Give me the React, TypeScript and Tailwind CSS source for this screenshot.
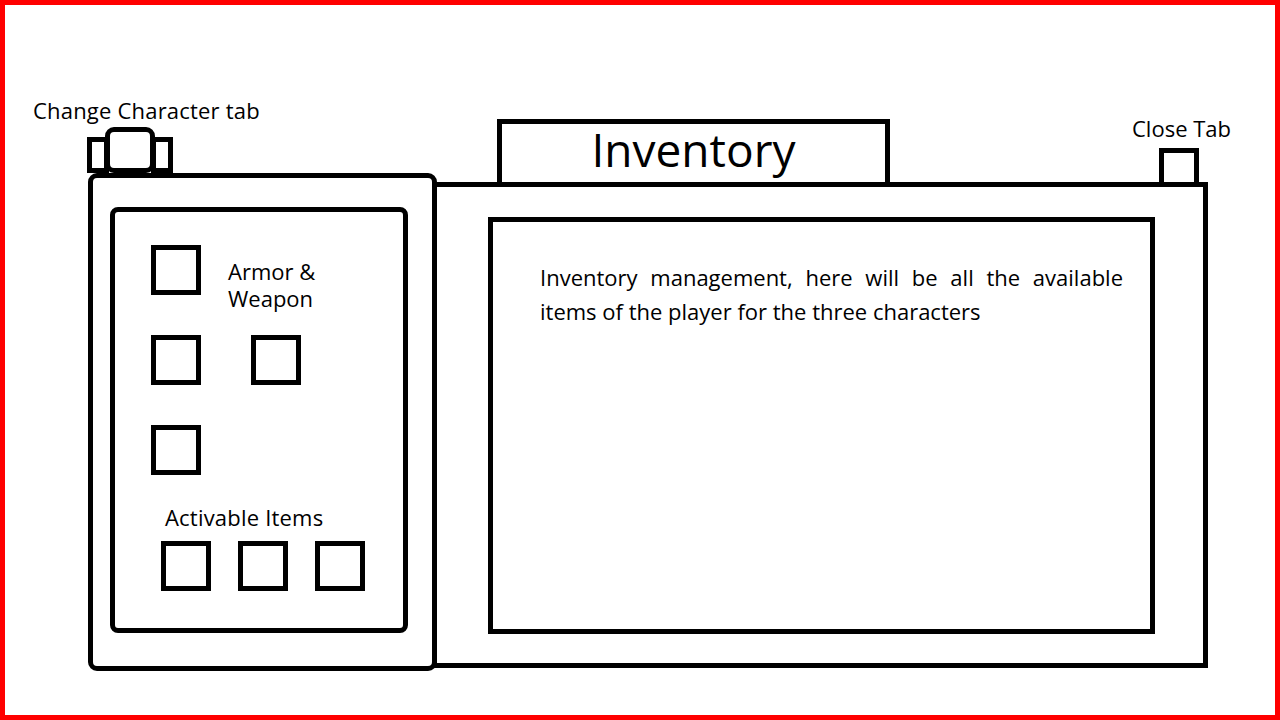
import React from 'react';

const Slot: React.FC = () => <div className="w-[50px] h-[50px] border-[5px] border-black shrink-0" />;

export default function App() {
  return (
    <div
      className="w-[1280px] h-[720px] bg-white border-[5px] border-[#ff0000] flex pl-[28px] text-black overflow-hidden"
      style={{ fontFamily: '"Open Sans", "Noto Sans", sans-serif' }}
    >
      {/* character panel */}
      <div className="flex flex-col w-[404px] pt-[92px] relative z-10 shrink-0">
        <div className="text-[22px] leading-[26px] tracking-[0.2px] whitespace-nowrap">Change Character tab</div>
        <div className="ml-[54px] mt-[4px] flex items-end h-[46px]">
          <div className="w-[22px] h-[36px] border-[5px] border-black -mr-[4px]" />
          <div className="w-[50px] h-[46px] border-[5px] border-black rounded-[9px] bg-white relative" />
          <div className="w-[22px] h-[36px] border-[5px] border-black -ml-[4px]" />
        </div>
        <div className="ml-[55px] w-[349px] h-[498px] border-[5px] border-black rounded-[9px] bg-white pl-[17px] pt-[29px]">
          <div className="w-[298px] h-[426px] border-[5px] border-black rounded-[8px] pl-[36px] pt-[33px] flex flex-col">
            <div className="flex h-[50px]">
              <Slot />
              <div className="ml-[27px] mt-[13px] text-[22px] leading-[27px] whitespace-nowrap">
                Armor &amp;
                <br />
                Weapon
              </div>
            </div>
            <div className="flex gap-[50px] mt-[40px]">
              <Slot />
              <Slot />
            </div>
            <div className="flex mt-[40px]">
              <Slot />
            </div>
            <div className="ml-[14px] mt-[29px] text-[22px] leading-[26px] tracking-[0.2px] whitespace-nowrap">
              Activable Items
            </div>
            <div className="ml-[10px] mt-[11px] flex gap-[27px]">
              <Slot />
              <Slot />
              <Slot />
            </div>
          </div>
        </div>
      </div>

      {/* inventory panel */}
      <div className="flex flex-col w-[776px] -ml-[5px] pt-[114px] shrink-0">
        <div className="flex items-end h-[63px]">
          <div className="ml-[65px] w-[393px] h-[63px] border-[5px] border-b-0 border-black flex items-center justify-center">
            <span className="text-[46px] leading-[56px] -mt-[8px]">Inventory</span>
          </div>
          <div className="ml-auto mr-[9px] w-[40px] flex flex-col items-center">
            <span className="text-[22px] leading-[26px] ml-[5px] mb-[7px] whitespace-nowrap">Close Tab</span>
            <div className="w-[40px] h-[34px] border-[5px] border-b-0 border-black" />
          </div>
        </div>
        <div className="h-[486px] border-[5px] border-black pl-[51px] pt-[30px]">
          <div className="w-[667px] h-[417px] border-[5px] border-black pl-[47px] pr-[27px] pt-[38px]">
            <p className="text-[22px] leading-[34px] text-justify">
              Inventory management, here will be all the available items of the player for the three characters
            </p>
          </div>
        </div>
      </div>
    </div>
  );
}
